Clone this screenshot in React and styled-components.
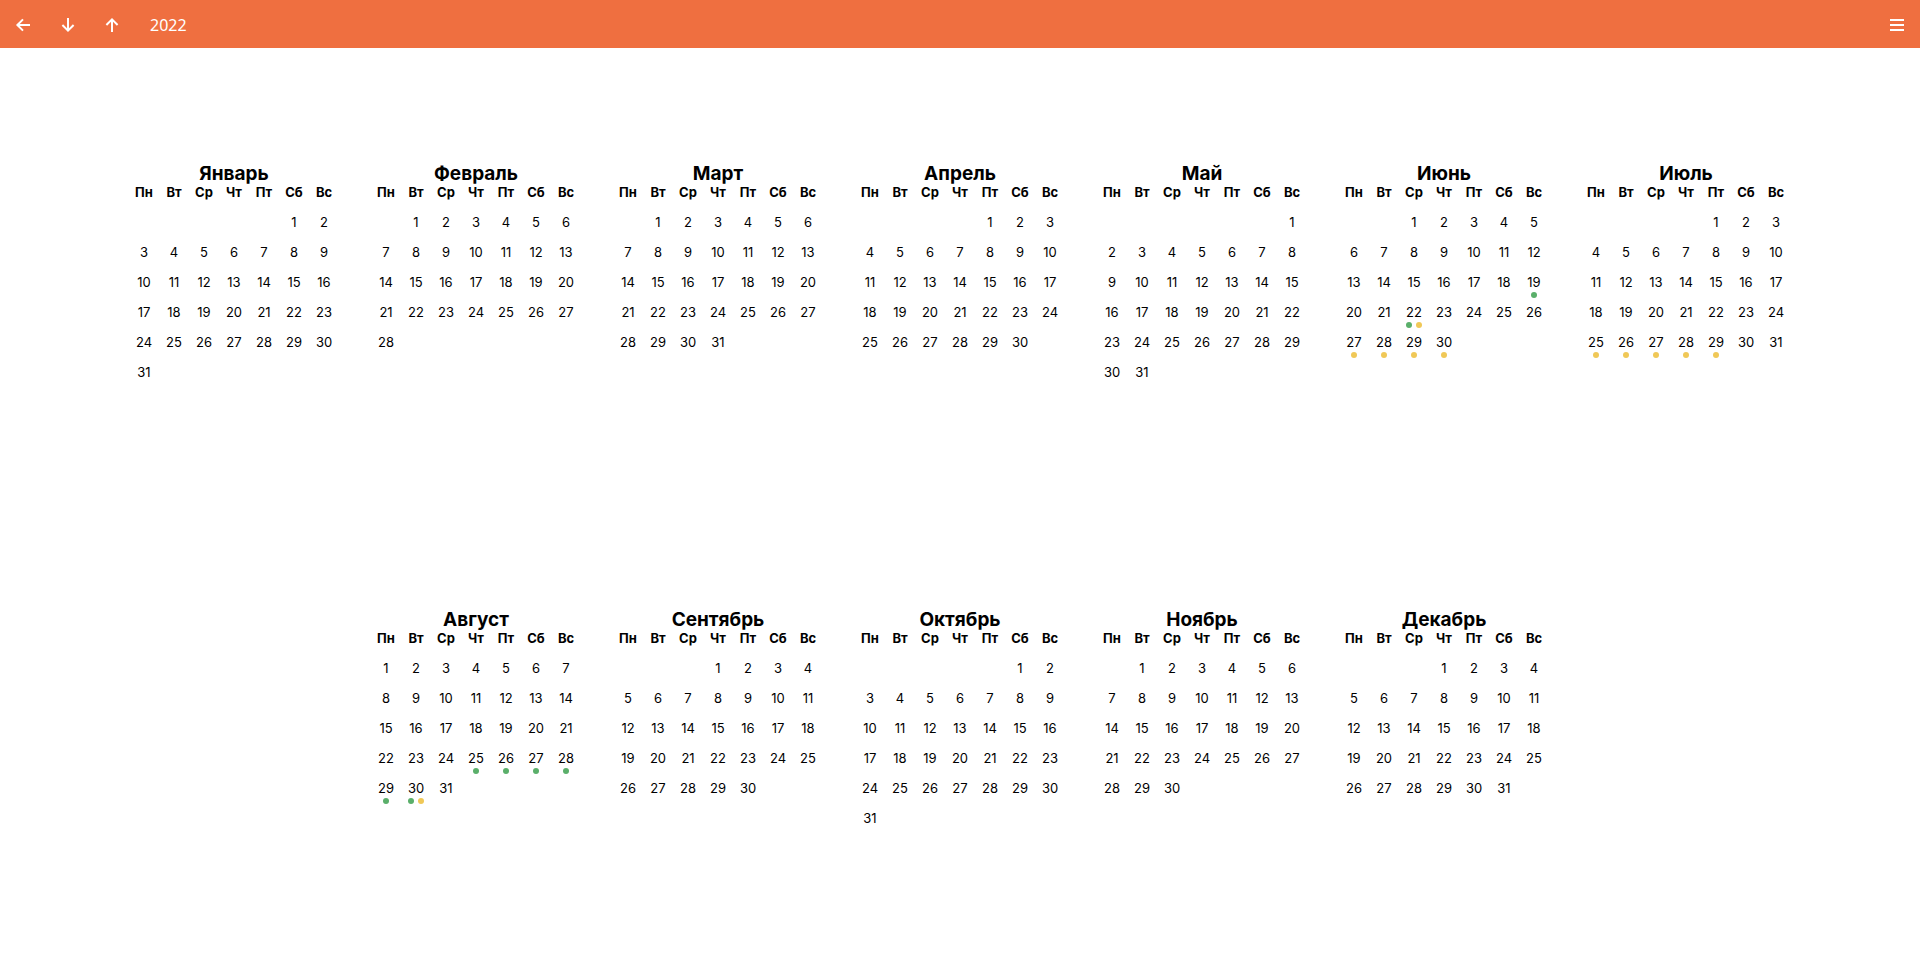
import React from "react";
import styled, { createGlobalStyle } from "styled-components";

const GlobalStyle = createGlobalStyle`
  * { box-sizing: border-box; }
  body {
    margin: 0;
    background: #ffffff;
    color: #000000;
    font-family: Inter, "Liberation Sans", sans-serif;
  }
`;

const Page = styled.div`
  display: flex;
  flex-direction: column;
  min-height: 100vh;
`;

const Toolbar = styled.header`
  display: flex;
  align-items: center;
  justify-content: space-between;
  height: 48px;
  padding: 2px 10px 0;
  background: #ef6f40;
  color: #ffffff;
`;

const Navigation = styled.nav`
  display: flex;
  align-items: center;
  gap: 16px;
`;

const IconButton = styled.button`
  display: flex;
  align-items: center;
  justify-content: center;
  width: 28px;
  height: 28px;
  padding: 0;
  border: 0;
  background: none;
  color: inherit;
  cursor: pointer;
`;

const Icon = styled.svg`
  width: 20px;
  height: 20px;
  fill: none;
  stroke: currentColor;
  stroke-width: 2;
`;

const Year = styled.h1`
  margin: 0 0 0 8px;
  font: 400 16px/24px "Noto Sans", sans-serif;
`;

const Months = styled.main`
  display: flex;
  flex: 1;
  flex-wrap: wrap;
  align-items: center;
  justify-content: center;
  padding: 7px 8px 8px;
`;

const Month = styled.table`
  border-collapse: collapse;
  table-layout: fixed;
  width: 210px;
  margin: 0 16px;
`;

const MonthName = styled.caption`
  font-size: 19px;
  font-weight: 700;
  line-height: 22px;
`;

const Weekday = styled.th`
  height: 28px;
  padding: 0;
  font-size: 13px;
  font-weight: 700;
  line-height: 14px;
  text-align: center;
  vertical-align: top;
`;

const Day = styled.td`
  height: 30px;
  padding: 0;
  font-size: 13px;
  line-height: 18px;
  text-align: center;
  vertical-align: top;
`;

const Marks = styled.div`
  display: flex;
  justify-content: center;
  gap: 4px;
  padding-top: 1px;
`;

const Mark = styled.span`
  width: 6px;
  height: 6px;
  border-radius: 50%;
  background: ${({ $kind }) => ($kind === "green" ? "#5aaf6a" : "#f0c857")};
`;

const YEAR = 2022;
const WEEKDAYS = ["Пн", "Вт", "Ср", "Чт", "Пт", "Сб", "Вс"];
const MONTHS = [
  "Январь", "Февраль", "Март", "Апрель", "Май", "Июнь",
  "Июль", "Август", "Сентябрь", "Октябрь", "Ноябрь", "Декабрь",
];

const G = ["green"];
const Y = ["yellow"];
const BOTH = ["green", "yellow"];

// Marks by zero-based month, then by day.
const EVENTS = {
  5: { 19: G, 22: BOTH, 27: Y, 28: Y, 29: Y, 30: Y },
  6: { 25: Y, 26: Y, 27: Y, 28: Y, 29: Y },
  7: { 25: G, 26: G, 27: G, 28: G, 29: G, 30: BOTH },
};

// Six weeks for every month, so that all months are equally tall.
function weeksOf(month) {
  const offset = (new Date(YEAR, month, 1).getDay() + 6) % 7;
  const count = new Date(YEAR, month + 1, 0).getDate();
  return Array.from({ length: 6 }, (_, week) =>
    WEEKDAYS.map((_, weekday) => {
      const day = week * 7 + weekday - offset + 1;
      return day > 0 && day <= count ? day : null;
    })
  );
}

function MonthTable({ month }) {
  const events = EVENTS[month] || {};
  return (
    <Month>
      <MonthName>{MONTHS[month]}</MonthName>
      <thead>
        <tr>
          {WEEKDAYS.map((name) => (
            <Weekday key={name} scope="col">{name}</Weekday>
          ))}
        </tr>
      </thead>
      <tbody>
        {weeksOf(month).map((week, i) => (
          <tr key={i}>
            {week.map((day, j) => (
              <Day key={j}>
                {day}
                {events[day] && (
                  <Marks>
                    {events[day].map((kind) => <Mark key={kind} $kind={kind} />)}
                  </Marks>
                )}
              </Day>
            ))}
          </tr>
        ))}
      </tbody>
    </Month>
  );
}

function ToolButton({ label, path }) {
  return (
    <IconButton type="button" aria-label={label}>
      <Icon viewBox="0 0 20 20" aria-hidden="true">
        <path d={path} />
      </Icon>
    </IconButton>
  );
}

export default function App() {
  return (
    <Page>
      <GlobalStyle />
      <Toolbar>
        <Navigation>
          <ToolButton label="Назад" path="M16 10H3.5M9 4.400L3.400 10l5.600 5.600" />
          <ToolButton label="Следующий год" path="M10 3v13M4.400 10L10 15.600l5.600-5.600" />
          <ToolButton label="Предыдущий год" path="M10 17V4M4.400 10L10 4.400l5.600 5.600" />
          <Year>{YEAR}</Year>
        </Navigation>
        <ToolButton label="Меню" path="M4 5h14M4 10h14M4 15h14" />
      </Toolbar>
      <Months>
        {MONTHS.map((name, month) => (
          <MonthTable key={name} month={month} />
        ))}
      </Months>
    </Page>
  );
}
